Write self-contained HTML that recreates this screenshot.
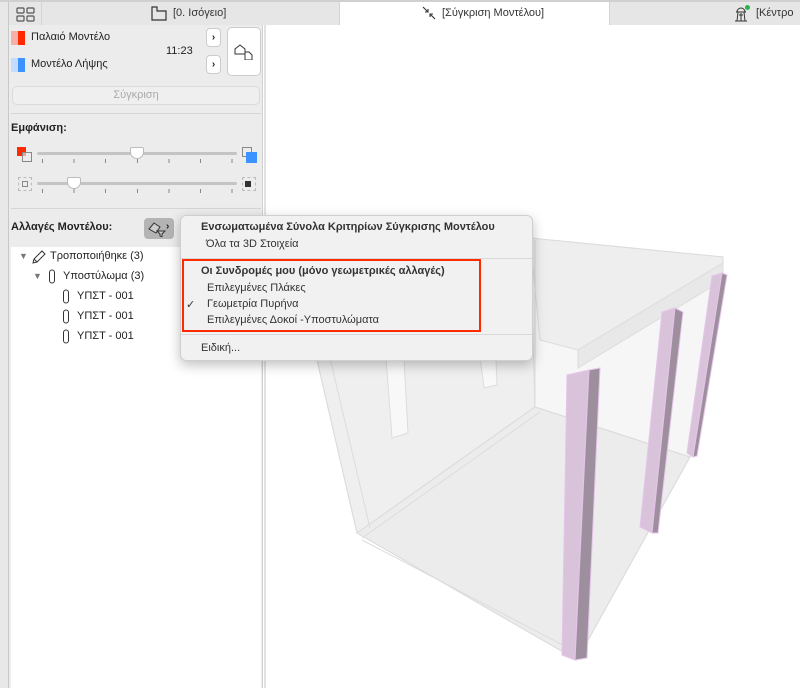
<!DOCTYPE html>
<html><head><meta charset="utf-8"><style>
*{box-sizing:border-box;margin:0;padding:0}
body{width:800px;height:688px;overflow:hidden;background:#fff;font-family:"Liberation Sans","DejaVu Sans",sans-serif;font-size:11px;color:#222;position:relative}
.a{position:absolute}
.tab{position:absolute;top:2px;height:23px;background:#e6e6e6;border-right:1px solid #d4d4d4;font-size:11px;color:#333;line-height:23px}
.tree div{position:absolute;font-size:11px;white-space:nowrap}
.menu{position:absolute;left:180px;top:215px;width:353px;height:146px;background:#f1f1f1;border:1px solid #cfcfcf;border-radius:6px;box-shadow:0 4px 12px rgba(0,0,0,.25)}
.menu div{position:absolute;white-space:nowrap;font-size:11px;color:#333}
</style></head><body>
<div class="a" style="left:0;top:0;width:9px;height:688px;background:#e8e8e8;border-right:1px solid #c8c8c8"></div>
<div class="a" style="left:9px;top:25px;width:254px;height:663px;background:#ececec;border-right:1px solid #d0d0d0"></div>
<div class="a" style="left:264px;top:25px;width:2px;height:663px;background:#e2e2e2"></div>
<div class="a" style="left:0;top:0;width:800px;height:2px;background:#d0d0d0"></div>
<div class="tab" style="left:9px;width:33px;background:#e6e6e6">
<svg width="33" height="23"><g fill="none" stroke="#555" stroke-width="1.2"><rect x="8" y="6" width="7" height="5" rx="1"/><rect x="18" y="6" width="7" height="5" rx="1"/><rect x="8" y="14" width="7" height="5" rx="1"/><rect x="18" y="14" width="7" height="5" rx="1"/></g></svg></div>
<div class="tab" style="left:42px;width:298px"><svg class="a" style="left:109px;top:4px" width="16" height="15"><path d="M1 1h5v4h9v9H1z" fill="none" stroke="#333" stroke-width="1.2"/></svg><span class="a" style="left:131px">[0. Ισόγειο]</span></div>
<div class="tab" style="left:340px;width:270px;background:#fff;height:23px"><svg class="a" style="left:82px;top:4px" width="14" height="14"><path d="M1 1l5 5M6 3v3H3M13 13l-5-5M8 11V8h3" fill="none" stroke="#333" stroke-width="1.1"/></svg><span class="a" style="left:102px">[Σύγκριση Μοντέλου]</span></div>
<div class="tab" style="left:610px;width:190px;border-right:none"><svg class="a" style="left:124px;top:4px" width="14" height="16"><path d="M3 6a4 4 0 0 1 8 0M2 6h10M4 6l-1 9M10 6l1 9M1 15h12M5 9h4M7 7v8" fill="none" stroke="#333" stroke-width="1"/></svg><div class="a" style="left:135px;top:3px;width:5px;height:5px;border-radius:50%;background:#2bb24c"></div><span class="a" style="left:146px">[Κέντρο</span></div>
<div class="a" style="left:11px;top:31px;width:7px;height:14px;background:#f7b0a8"></div><div class="a" style="left:18px;top:31px;width:7px;height:14px;background:#ff2a00"></div>
<div class="a" style="left:31px;top:31px;font-size:11px">Παλαιό Μοντέλο</div>
<div class="a" style="left:11px;top:58px;width:7px;height:14px;background:#c4dcff"></div><div class="a" style="left:18px;top:58px;width:7px;height:14px;background:#3c92ff"></div>
<div class="a" style="left:31px;top:58px;font-size:11px">Μοντέλο Λήψης</div>
<div class="a" style="left:166px;top:45px;font-size:11px">11:23</div>
<div class="a" style="left:206px;top:28px;width:15px;height:19px;background:#fff;border:1px solid #ccc;border-radius:4px;font-size:10px;text-align:center;line-height:17px;font-weight:bold">›</div>
<div class="a" style="left:206px;top:55px;width:15px;height:19px;background:#fff;border:1px solid #ccc;border-radius:4px;font-size:10px;text-align:center;line-height:17px;font-weight:bold">›</div>
<div class="a" style="left:227px;top:27px;width:34px;height:49px;background:#fff;border:1px solid #ccc;border-radius:5px"><svg class="a" style="left:6px;top:16px" width="22" height="16"><path d="M1 10V5l5-4 5 4v5zM11 8h4l3 3v5h-7z" fill="#fff" stroke="#333" stroke-width="1"/></svg></div>
<div class="a" style="left:12px;top:86px;width:248px;height:19px;background:#efefef;border:1px solid #dadada;border-radius:5px;text-align:center;line-height:17px;color:#aaa">Σύγκριση</div>
<div class="a" style="left:11px;top:113px;width:250px;height:1px;background:#d6d6d6"></div>
<div class="a" style="left:11px;top:122px;font-weight:bold;font-size:11px">Εμφάνιση:</div>
<div class="a" style="left:17px;top:147px;width:9px;height:9px;background:#ff2a00"></div><div class="a" style="left:22px;top:152px;width:10px;height:10px;border:1px solid #888;background:rgba(236,236,236,.6)"></div>
<div class="a" style="left:37px;top:152px;width:200px;height:3px;background:#c4c4c4;border-radius:2px"></div>
<div class="a" style="left:130px;top:147px;width:14px;height:12px;background:#fff;border:1px solid #bbb;border-radius:2px 2px 7px 7px"></div>
<div class="a" style="left:242px;top:147px;width:10px;height:10px;border:1px solid #888"></div><div class="a" style="left:246px;top:152px;width:11px;height:11px;background:#3c92ff"></div>
<div class="a" style="left:42px;top:159px;width:192px;height:4px;background:repeating-linear-gradient(90deg,#888 0 1px,transparent 1px 31.6px)"></div>
<div class="a" style="left:18px;top:177px;width:14px;height:14px;border:1px dashed #bbb"></div><div class="a" style="left:22px;top:181px;width:6px;height:6px;border:1px solid #888"></div>
<div class="a" style="left:37px;top:182px;width:200px;height:3px;background:#c4c4c4;border-radius:2px"></div>
<div class="a" style="left:67px;top:177px;width:14px;height:12px;background:#fff;border:1px solid #bbb;border-radius:2px 2px 7px 7px"></div>
<div class="a" style="left:242px;top:177px;width:14px;height:14px;border:1px dashed #bbb"></div><div class="a" style="left:245px;top:181px;width:6px;height:6px;background:#333"></div>
<div class="a" style="left:42px;top:189px;width:192px;height:4px;background:repeating-linear-gradient(90deg,#888 0 1px,transparent 1px 31.6px)"></div>
<div class="a" style="left:11px;top:208px;width:250px;height:1px;background:#d6d6d6"></div>
<div class="a" style="left:11px;top:221px;font-weight:bold;font-size:11px">Αλλαγές Μοντέλου:</div>
<div class="a" style="left:144px;top:218px;width:30px;height:21px;background:#b4b4b4;border-radius:4px"><svg class="a" style="left:3px;top:3px" width="20" height="16"><path d="M2 8l5-6 6 4-4 6zM10 10h8l-3 3v3l-2-1v-2z" fill="#ccc" stroke="#333" stroke-width="1"/></svg><span class="a" style="left:22px;top:3px;font-size:10px;font-weight:bold">›</span></div>
<div class="a tree" style="left:11px;top:247px;width:250px;height:441px;background:#fff">
<div style="left:8px;top:4px;color:#777;font-size:9px">▼</div>
<svg class="a" style="left:20px;top:3px" width="16" height="14"><path d="M2 13l1-4 8-8 3 3-8 8zM3 9l3 3" fill="none" stroke="#333" stroke-width="1"/></svg>
<div style="left:39px;top:3px">Τροποποιήθηκε (3)</div>
<div style="left:22px;top:24px;color:#777;font-size:9px">▼</div>
<svg class="a" style="left:37px;top:22px" width="8" height="15"><rect x="1.5" y="1" width="5" height="13" rx="2.5" fill="none" stroke="#333"/></svg>
<div style="left:52px;top:23px">Υποστύλωμα (3)</div>
<svg class="a" style="left:51px;top:42px" width="8" height="15"><rect x="1.5" y="1" width="5" height="13" rx="2.5" fill="none" stroke="#333"/></svg>
<div style="left:66px;top:43px">ΥΠΣΤ - 001</div>
<svg class="a" style="left:51px;top:62px" width="8" height="15"><rect x="1.5" y="1" width="5" height="13" rx="2.5" fill="none" stroke="#333"/></svg>
<div style="left:66px;top:63px">ΥΠΣΤ - 001</div>
<svg class="a" style="left:51px;top:82px" width="8" height="15"><rect x="1.5" y="1" width="5" height="13" rx="2.5" fill="none" stroke="#333"/></svg>
<div style="left:66px;top:83px">ΥΠΣΤ - 001</div>
</div>
<svg class="a" style="left:266px;top:25px" width="534" height="663" viewBox="266 25 534 663">
<g stroke="#dcdcdc" stroke-width="1">
<polygon points="317,360 530,238 535,407 357,533" fill="#efefef"/>
<polygon points="357,533 535,407 690,457 577,660" fill="#ececec"/>
<polygon points="530,238 723,257 690,457 535,407" fill="#f6f6f6"/>
<polygon points="530,238 723,257 723,263 578,350 540,340" fill="#eeeeee"/>
<polygon points="578,350 723,263 723,280 578,368" fill="#e8e8e8"/>
<polygon points="385,345 403,340 408,433 392,438" fill="#f8f8f8"/>
<polygon points="478,340 495,336 497,385 484,388" fill="#f8f8f8"/>
<line x1="357" y1="533" x2="535" y2="407"/><line x1="362" y1="538" x2="540" y2="412"/>
<line x1="357" y1="533" x2="577" y2="660"/><line x1="362" y1="540" x2="578" y2="653"/>
<line x1="577" y1="660" x2="690" y2="457"/>
<line x1="535" y1="407" x2="690" y2="457"/>
<line x1="317" y1="360" x2="357" y2="533"/>
<line x1="330" y1="358" x2="370" y2="528"/>
<line x1="535" y1="240" x2="535" y2="407"/>
</g>
<g stroke="#e6c4ea" stroke-width="1">
<polygon points="567,375 589,370 575,660 562,655" fill="#d9c3da"/>
<polygon points="589,370 600,368 587,658 575,660" fill="#9e8f9e"/>
<polygon points="662,312 675,308 652,533 640,527" fill="#d9c3da"/>
<polygon points="675,308 683,312 658,533 652,533" fill="#9e8f9e"/>
<polygon points="712,276 722,273 693,457 687,453" fill="#d9c3da"/>
<polygon points="722,273 727,275 697,456 693,457" fill="#9e8f9e"/>
</g>
</svg>
<div class="menu">
<div style="left:20px;top:5px;font-weight:bold">Ενσωματωμένα Σύνολα Κριτηρίων Σύγκρισης Μοντέλου</div>
<div style="left:25px;top:22px">Όλα τα 3D Στοιχεία</div>
<div style="left:0;top:42px;width:351px;height:1px;background:#d8d8d8"></div>
<div style="left:20px;top:49px;font-weight:bold">Οι Συνδρομές μου (μόνο γεωμετρικές αλλαγές)</div>
<div style="left:26px;top:66px">Επιλεγμένες Πλάκες</div>
<div style="left:5px;top:82px">✓</div>
<div style="left:26px;top:82px">Γεωμετρία Πυρήνα</div>
<div style="left:26px;top:98px">Επιλεγμένες Δοκοί -Υποστυλώματα</div>
<div style="left:0;top:118px;width:351px;height:1px;background:#d8d8d8"></div>
<div style="left:20px;top:126px">Ειδική...</div>
<div style="left:1px;top:43px;width:299px;height:73px;border:2px solid #ff2a00"></div>
</div>
</body></html>
